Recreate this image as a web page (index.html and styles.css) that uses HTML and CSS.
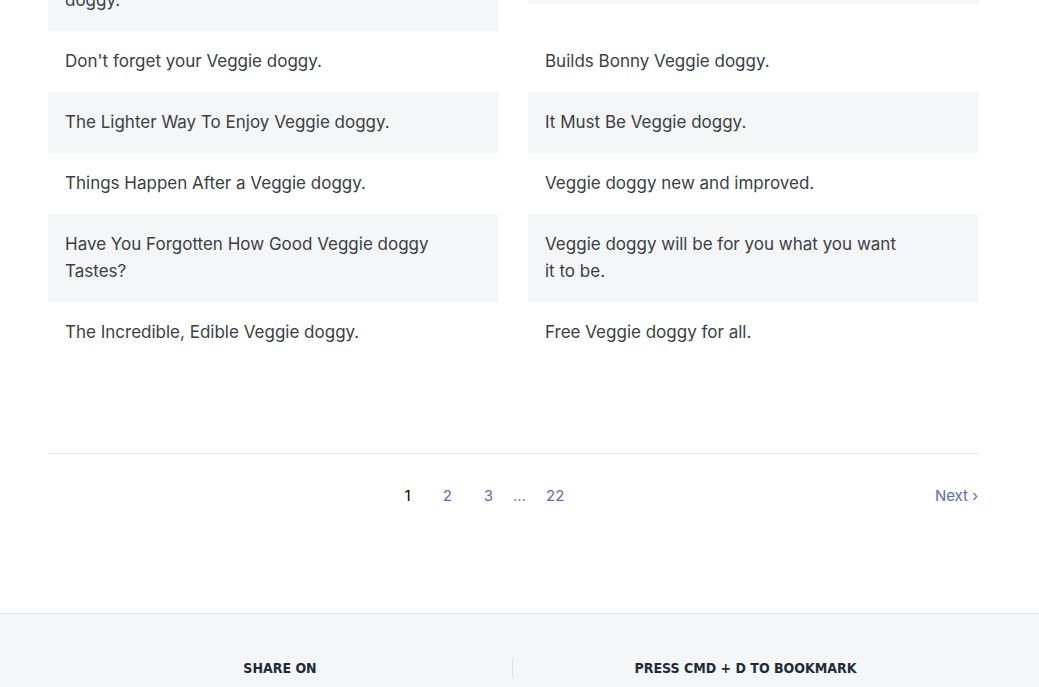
FILE: index.html
```html
<!DOCTYPE html>
<html lang="en">
<head>
<meta charset="utf-8">
<title>Veggie doggy slogans</title>
<link rel="stylesheet" href="styles.css">
</head>
<body>
<main class="page">
  <ul class="slogans">
    <li class="slogan">Nothing Says Summer Like a Hot Veggie doggy.</li>
    <li class="slogan">Where there's Veggie doggy, there's joy.</li>
    <li class="slogan">Don't forget your Veggie doggy.</li>
    <li class="slogan">Builds Bonny Veggie doggy.</li>
    <li class="slogan">The Lighter Way To Enjoy Veggie doggy.</li>
    <li class="slogan">It Must Be Veggie doggy.</li>
    <li class="slogan">Things Happen After a Veggie doggy.</li>
    <li class="slogan">Veggie doggy new and improved.</li>
    <li class="slogan">Have You Forgotten How Good Veggie doggy Tastes?</li>
    <li class="slogan">Veggie doggy will be for you what you want it to be.</li>
    <li class="slogan">The Incredible, Edible Veggie doggy.</li>
    <li class="slogan">Free Veggie doggy for all.</li>
  </ul>

  <nav class="pagination">
    <span class="pagination-prev"></span>
    <div class="pages">
      <span class="page-item current">1</span>
      <a class="page-item" href="#">2</a>
      <a class="page-item" href="#">3</a>
      <span class="page-gap">…</span>
      <a class="page-item" href="#">22</a>
    </div>
    <a class="pagination-next" href="#">Next ›</a>
  </nav>
</main>

<footer class="footer">
  <div class="footer-inner">
    <div class="footer-col">
      <h3 class="footer-title">Share on</h3>
    </div>
    <div class="footer-col footer-col-divided">
      <h3 class="footer-title">Press CMD + D to bookmark</h3>
    </div>
  </div>
</footer>
</body>
</html>
```

FILE: styles.css
```css
html, body {
  margin: 0;
  padding: 0;
  background: #ffffff;
}

body {
  font-family: Inter, "Noto Sans", sans-serif;
  color: #3a3f44;
  font-size: 16px;
}

.page {
  width: 930px;
  margin: -57px 0 0 48px;
}

.slogans {
  list-style: none;
  margin: 0;
  padding: 0;
  display: grid;
  grid-template-columns: 450px 450px;
  column-gap: 30px;
  align-items: start;
}

.slogan {
  padding: 17px 68.5px 17px 17px;
  line-height: 27px;
  font-size: 17px;
}

.slogan:nth-child(4n+1),
.slogan:nth-child(4n+2) {
  background: #f4f6f8;
}

.pagination {
  margin-top: 90px;
  border-top: 1px solid #e3e5e8;
  padding-top: 32px;
  display: flex;
  justify-content: space-between;
  align-items: center;
  font-size: 15px;
  line-height: 20px;
}

.pages {
  display: flex;
  align-items: center;
  margin-right: 14px;
}

.page-item {
  padding: 0 16px;
  color: #5c6ac4;
  text-decoration: none;
}

.page-item.current {
  color: #000000;
}

.page-gap {
  padding: 0 4px;
  color: #8c929c;
}

.pagination-next {
  color: #5c6ac4;
  text-decoration: none;
}

.footer {
  margin-top: 107px;
  background: #f4f6f8;
  border-top: 1px solid #dfe3e8;
  padding-top: 44px;
  height: 120px;
}

.footer-inner {
  width: 930px;
  margin-left: 48px;
  display: flex;
}

.footer-col {
  flex: 0 0 464px;
  text-align: center;
}

.footer-col-divided {
  flex: 1;
  border-left: 1px solid #dfe3e8;
}

.footer-title {
  margin: 0;
  font-family: "DejaVu Sans Condensed", "DejaVu Sans", sans-serif;
  font-stretch: condensed;
  font-weight: 700;
  font-size: 14px;
  line-height: 20px;
  text-transform: uppercase;
  color: #212b36;
}
```
